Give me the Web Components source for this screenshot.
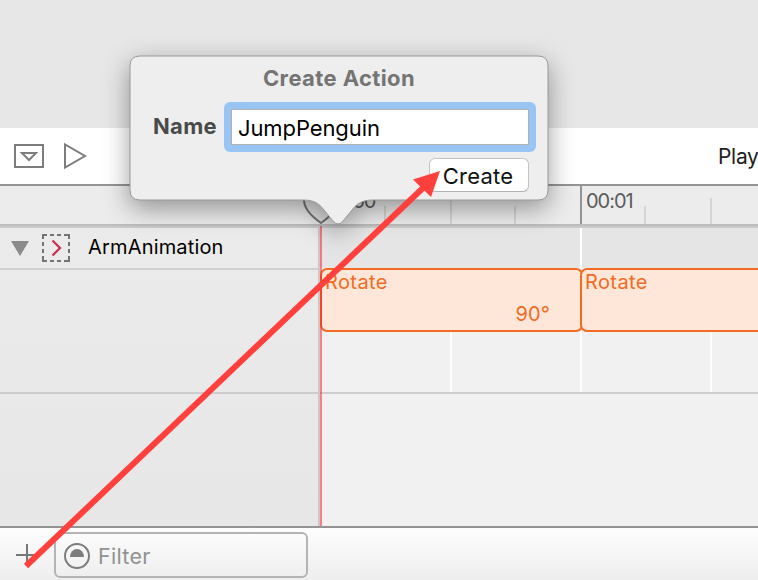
<!DOCTYPE html>
<html lang="en">
<head>
<meta charset="utf-8">
<title>Action timeline</title>
<style>
html,body{margin:0;width:758px;height:580px;overflow:hidden}
body{font-family:Inter,"Liberation Sans",sans-serif;color:#000}
</style>
</head>
<body>
<timeline-app></timeline-app>
<script>
const define = (name, html) => customElements.define(name, class extends HTMLElement {
  constructor() {
    super();
    this.attachShadow({mode: 'open'}).innerHTML = html;
  }
});

define('tool-bar', `<style>
:host{display:flex;box-sizing:border-box;height:58px;background:#fff;border-bottom:2px solid #949494;align-items:center;padding-left:14px}
.play{margin-left:19px}
span{margin-left:auto;width:40px;white-space:nowrap;font-size:21px;line-height:54px;padding-top:1px;letter-spacing:-.3px;color:#222}
</style>
<svg width="30" height="24" fill="none" stroke="#7d7d7d" stroke-width="2"><path d="M1 1H29V23H1Z"/><path d="M8 9H22L15 16Z"/></svg>
<svg class="play" width="26" height="28" fill="none" stroke="#7d7d7d" stroke-width="2"><path d="M2 2.5V25.5L22 14Z"/></svg>
<span><slot></slot></span>`);

define('time-ruler', `<style>
:host{display:grid;grid-template-columns:320px 260px 178px;height:38px;background:#ececec;border-bottom:2px solid #bdbdbd;box-shadow:0 2px #cacaca;font-size:20px;color:#5c5c5c}
div{position:relative;padding-left:5px;line-height:31px;letter-spacing:-1.2px}
.second{border-left:2px solid #949494;padding-left:4px;letter-spacing:-1px}
.second svg{left:-2px}
svg{position:absolute;left:0;top:0}
</style>
<div></div>
<div>00:00<svg width="260" height="38" stroke="#d4d4d4" stroke-width="2"><path d="M65 20V38M131 12V38M195 20V38"/></svg></div>
<div class="second">00:01<svg width="178" height="38" stroke="#d4d4d4" stroke-width="2"><path d="M65 20V38M131 12V38"/></svg></div>`);

define('action-clip', `<style>
:host{display:block;box-sizing:border-box;height:64px;border:2px solid #f36b23;border-radius:7px;background:#fee7d9;color:#f36b23;font-size:20px;line-height:24px}
div{padding-left:3px;letter-spacing:.4px}
p{margin:8px 31px 0 0;text-align:right;letter-spacing:.1px}
</style><div><slot></slot></div><p><slot name="value"></slot></p>`);

define('track-header', `<style>
:host{display:flex;flex-direction:column;background:linear-gradient(#ebebeb,#e7e7e7);border-right:2px solid #c9c9c9}
.name{display:flex;align-items:center;height:40px;border-bottom:2px solid #cfcfcf;font-size:20px;padding-left:11px}
.name span{margin-left:18px;position:relative;top:-1px;letter-spacing:.17px}
.body{height:122px;border-bottom:2px solid #cdcdcd}
.mark{margin-left:13px}
</style>
<div class="name"><svg width="18" height="16"><path d="M0 1H18L9 16Z" fill="#8b8b8b"/></svg>
<svg class="mark" width="28" height="28" fill="none" stroke-width="2"><path d="M1 5V1H5M8 1H12M15 1H19M22 1H27V5M27 8V12M27 15V19M27 22V27H22M19 27H15M12 27H8M5 27H1V22M1 19V15M1 12V8" stroke="#747474"/><path d="M10.5 6.5L18 14L10.5 21.5" stroke="#c83550" stroke-width="2.3"/></svg>
<span><slot></slot></span></div><div class="body"></div>`);

define('track-lane', `<style>
:host{display:flex;flex-direction:column;background:#f1f1f1;overflow:hidden}
.head{height:40px;background:linear-gradient(90deg,transparent 260px,#fff 260px 262px,transparent 262px) #e5e5e5}
.clips{display:grid;grid-template-columns:263px 262px;height:64px}
.clips ::slotted(:last-child){margin-left:-3px}
.grid{height:60px;border-bottom:2px solid #cdcdcd;background:linear-gradient(90deg,transparent 130px,#fff 130px 132px,transparent 132px 260px,#fff 260px 262px,transparent 262px 390px,#fff 390px 392px,transparent 392px)}
</style><div class="head"></div><div class="clips"><slot></slot></div><div class="grid"></div>`);

define('filter-bar', `<style>
:host{display:flex;align-items:flex-start;box-sizing:border-box;height:54px;border-top:2px solid #949494;background:linear-gradient(#fdfdfd,#eee);padding-left:16px}
.add{margin-top:15px}
.field{box-sizing:border-box;width:254px;height:46px;border:2px solid #b4b4b4;border-radius:6px;margin:4px 0 0 16px;display:flex;align-items:center;padding-left:8px;gap:8px;font-size:21.5px;line-height:42px;color:#929292}
.field svg{position:relative;top:.5px}
.field span{padding-top:2px;letter-spacing:.3px}
</style>
<svg class="add" width="22" height="24" stroke="#777" stroke-width="2"><path d="M0 12H22M11 1V23"/></svg>
<div class="field"><svg width="26" height="26"><circle cx="13" cy="13" r="12" fill="none" stroke="#7d7d7d" stroke-width="2"/><path d="M6 14A7 8 0 0 1 20 14Z" fill="#7d7d7d"/></svg><span><slot></slot></span></div>`);

define('action-popover', `<style>
:host{display:block;width:418px;height:144px}
.bg{position:absolute;left:-30px;top:-30px;overflow:visible;filter:drop-shadow(0 8px 13px rgba(0,0,0,.38))}
.content{position:relative;height:144px;color:#4a4a4a}
h1{margin:0;font-size:22px;line-height:44px;height:46px;text-align:center;color:#747474;letter-spacing:.4px}
.row{display:flex;padding-left:23px;font-size:22px}
b{width:71px;line-height:49px;letter-spacing:.3px}
.field{box-sizing:border-box;width:312px;height:50px;background:#98c5f4;border-radius:6px;padding:7px}
.field div{box-sizing:border-box;height:36px;border:1px solid #b2b2b2;background:#fff;color:#000;padding-left:6px;line-height:36px;letter-spacing:-.1px}
button{display:block;box-sizing:border-box;width:100px;height:34px;margin:6px 19px 0 auto;padding:2px 2px 0 0;border:1px solid #c3c3c3;border-bottom-color:#b3b3b3;border-radius:6px;background:#fff;font:22px/30px Inter,"Liberation Sans",sans-serif;letter-spacing:.2px;color:#111}
</style>
<svg class="bg" width="478" height="234"><path d="M40 30H438Q448 30 448 40V164Q448 174 438 174H273C260 174 256 179 252 184L243 195Q238 201 233 195L224 184C220 179 216 174 203 174H40Q30 174 30 164V40Q30 30 40 30Z" fill="#eee" stroke="#999" stroke-width="1"/></svg>
<div class="content"><h1><slot></slot></h1><div class="row"><b>Name</b><div class="field"><div>JumpPenguin</div></div></div><button>Create</button></div>`);

define('timeline-app', `<style>
:host{display:block;position:relative;width:758px;height:580px;overflow:hidden;background:#e7e7e7}
.frame{display:flex;flex-direction:column;height:580px}
.canvas{height:128px;background:#e7e7e7}
.tracks{display:grid;grid-template-columns:320px 438px;height:298px;margin-top:2px}
.over{position:absolute;left:0;top:0}
action-popover{position:absolute;left:130px;top:56px}
</style>
<div class="frame"><div class="canvas"></div><tool-bar>Play</tool-bar><time-ruler></time-ruler>
<div class="tracks"><track-header>ArmAnimation</track-header><track-lane><action-clip>Rotate<span slot="value">90°</span></action-clip><action-clip>Rotate</action-clip></track-lane></div>
<filter-bar>Filter</filter-bar></div>
<svg class="over" width="758" height="580"><path d="M304 190V200C304 209 311 216 321 223C331 216 338 209 338 200V190Z" fill="#e8e8e8" stroke="#777" stroke-width="2"/><path d="M321 226V526" stroke="#ff1f32" stroke-opacity=".55" stroke-width="2"/></svg>
<action-popover>Create Action</action-popover>
<svg class="over" width="758" height="580"><path d="M26 566L424 187" stroke="#ff403c" stroke-width="6"/><path d="M440 171L413 179.5L431 197Z" fill="#ff403c"/></svg>`);
</script>
</body>
</html>
